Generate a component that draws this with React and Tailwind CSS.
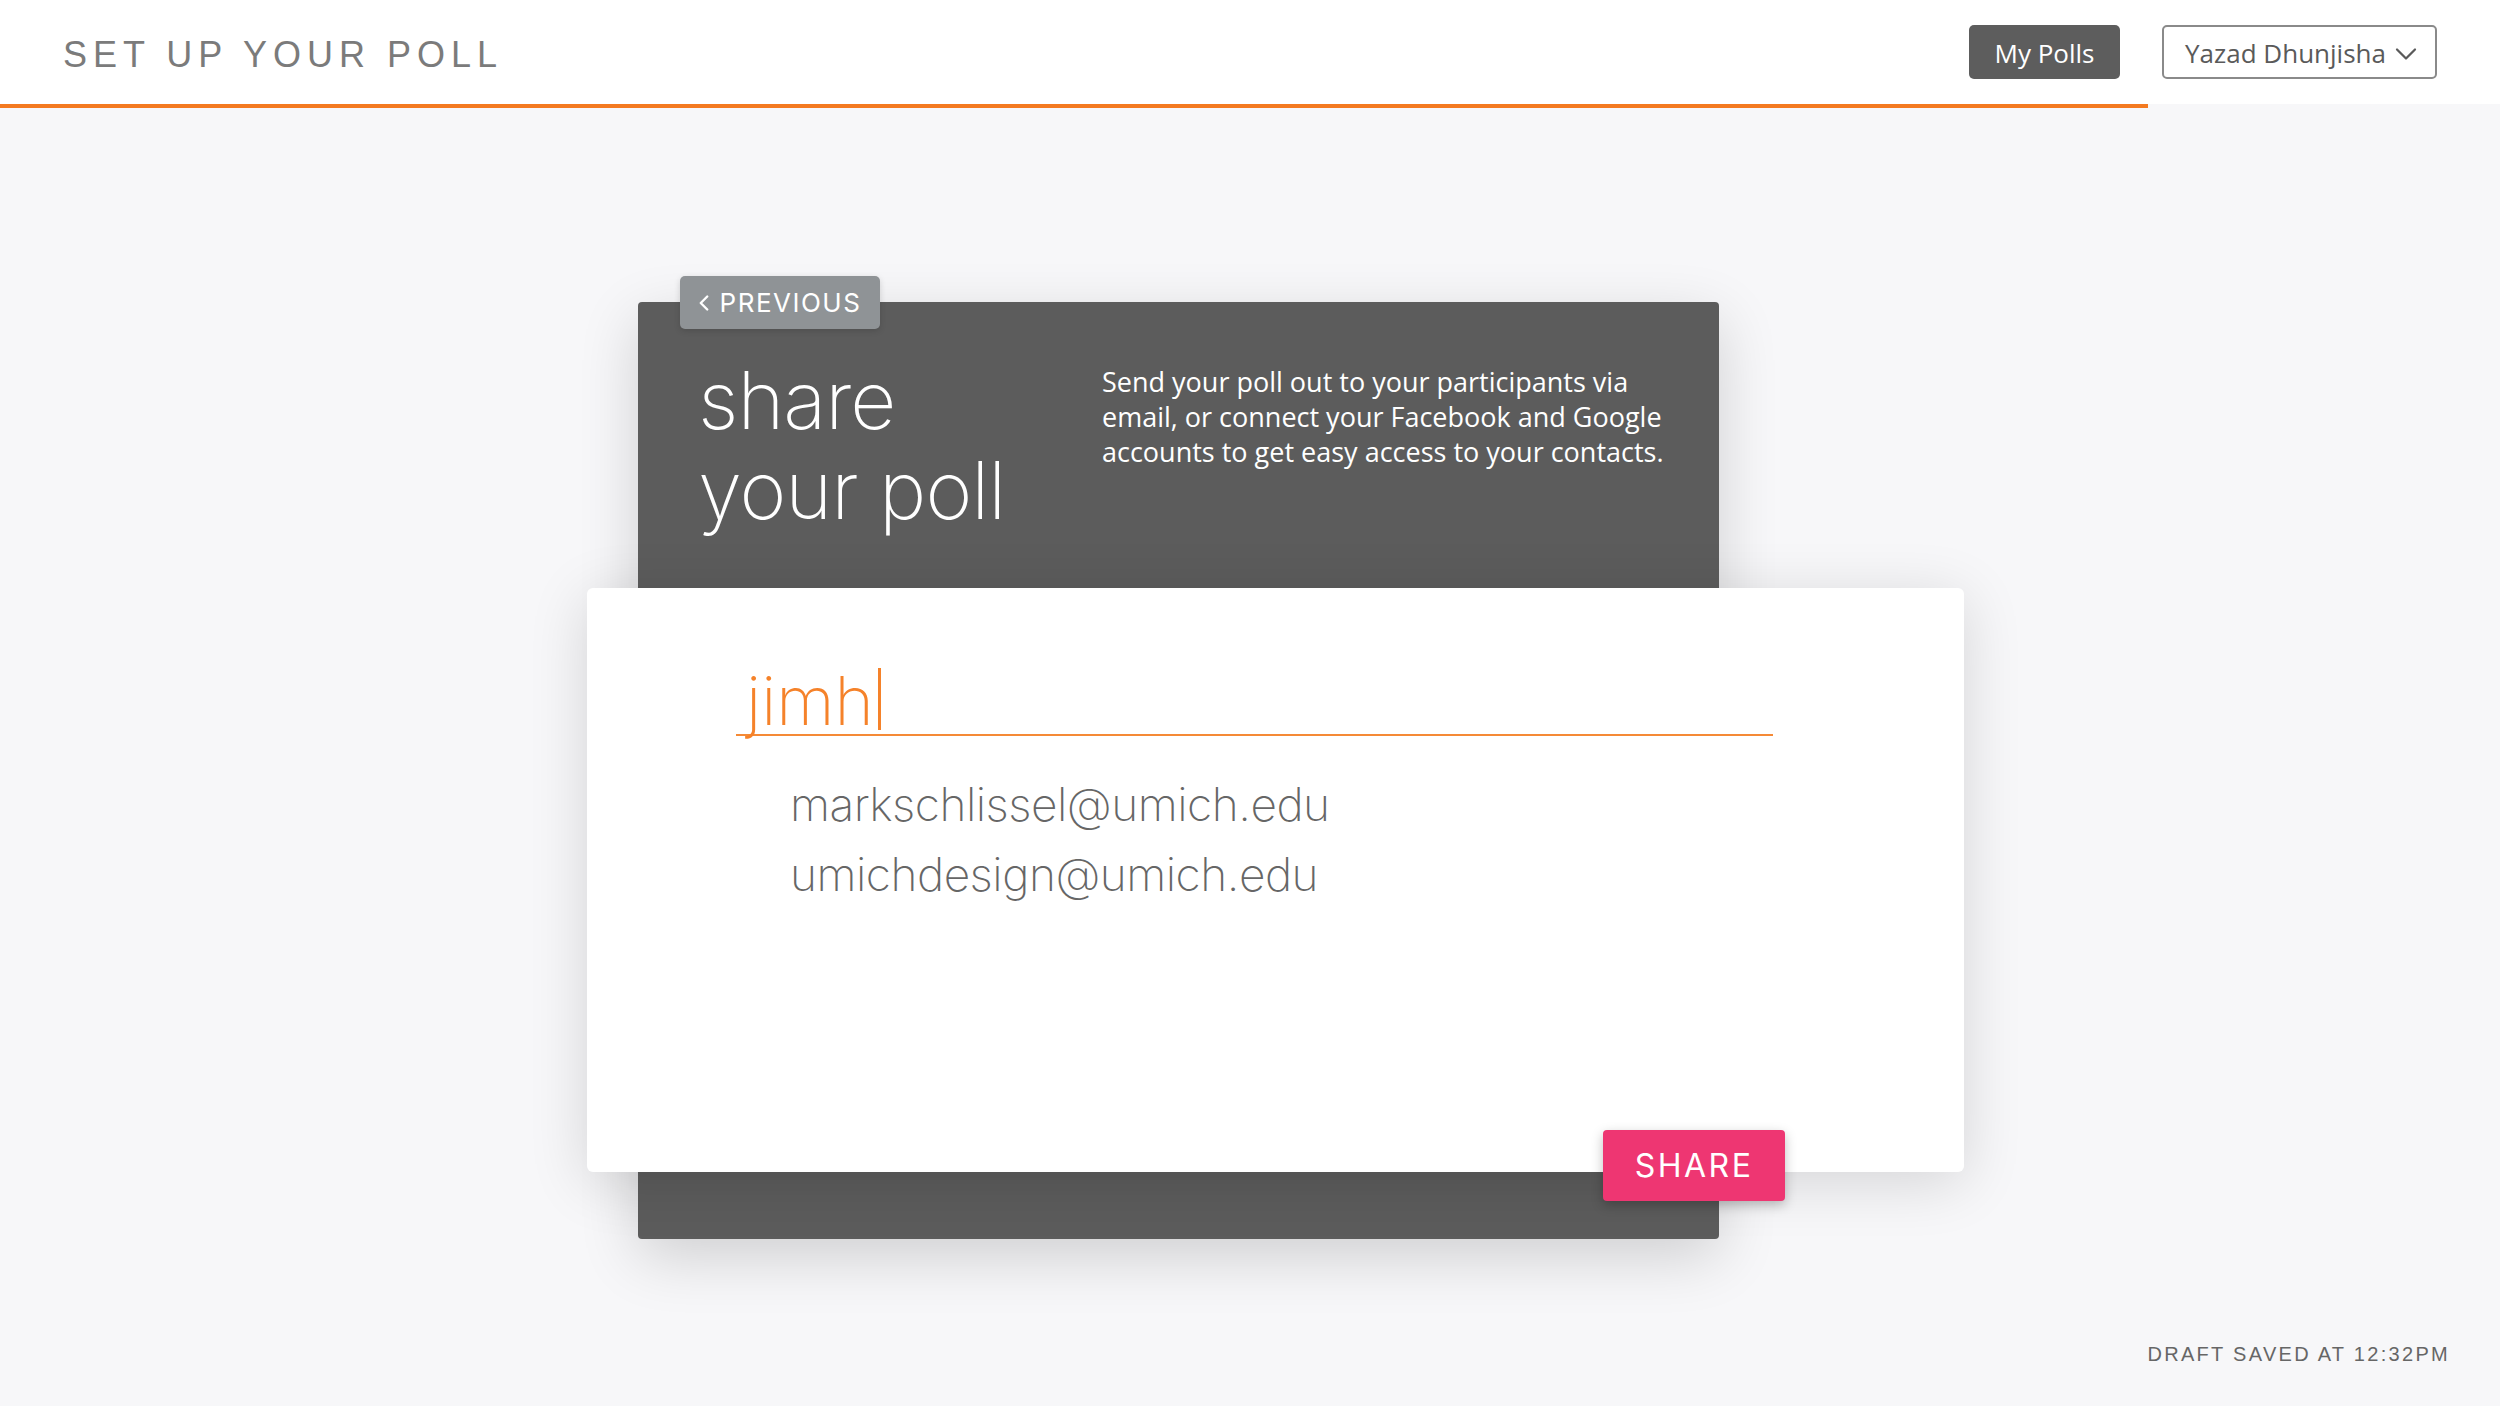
import React from "react";
import { ChevronDown, ChevronLeft } from "lucide-react";

const suggestions = ["markschlissel@umich.edu", "umichdesign@umich.edu"];

export default function App() {
  return (
    <div className="min-h-screen flex flex-col bg-[#f7f7f9]">
      {/* Top bar */}
      <header className="h-[104px] bg-white flex items-center justify-between pl-[63px] pr-[63px]">
        <h1 className="pt-[5px] font-['Liberation_Sans',sans-serif] text-[36px] tracking-[6px] text-[#7b7b7b] font-normal">
          SET UP YOUR POLL
        </h1>
        <div className="flex items-center gap-[42px] font-['Open_Sans',sans-serif]">
          <button className="h-[54px] w-[151px] rounded-[5px] bg-[#5d5d5d] text-white text-[26px] pt-[2px]">
            My Polls
          </button>
          <button className="h-[54px] w-[275px] rounded-[5px] border-2 border-[#8a8a8a] bg-white text-[#5a5a5a] text-[26px] flex items-center justify-center gap-[2px] pt-[2px] pl-[4px]">
            Yazad Dhunjisha
            <ChevronDown size={36} strokeWidth={1.5} className="text-[#5a5a5a] mt-[1px] -mr-[6px]" />
          </button>
        </div>
      </header>
      <div className="h-[4px]">
        <div className="h-full w-[2148px] bg-[#f47a20]" />
      </div>

      <main className="flex-1 flex flex-col">
        {/* Step card */}
        <div className="ml-[638px] mt-[194px] w-[1081px] rounded-[4px] bg-[#5c5c5c] relative shadow-[0_18px_60px_rgba(0,0,0,0.16)]">
          <button className="absolute -top-[26px] left-[42px] h-[53px] w-[200px] rounded-[5px] bg-[#8f9396] text-white flex items-center justify-center gap-[3px] font-['Inter',sans-serif] text-[26px] tracking-[1.5px] shadow-[0_2px_6px_rgba(0,0,0,0.15)]">
            <ChevronLeft size={26} strokeWidth={2.2} className="-ml-[8px]" />
            PREVIOUS
          </button>

          <div className="h-[286px] flex pl-[60px] pt-[53px]">
            <div className="w-[404px] font-['Inter',sans-serif] font-extralight text-white text-[80px] leading-[90px] tracking-[-1px]">
              share
              <br />
              your poll
            </div>
            <p className="mt-[9px] font-['Open_Sans',sans-serif] text-white text-[27px] leading-[35px] whitespace-nowrap">
              Send your poll out to your participants via
              <br />
              email, or connect your Facebook and Google
              <br />
              accounts to get easy access to your contacts.
            </p>
          </div>

          <div className="-ml-[51px] w-[1377px] h-[584px] bg-white rounded-[6px] relative pl-[149px] pt-[80px] shadow-[0_10px_60px_rgba(0,0,0,0.14)]">
            <div className="w-[1037px] h-[68px] border-b-2 border-[#f58a36] pl-[10px] flex items-start">
              <span className="font-['Inter',sans-serif] font-extralight text-[67px] leading-[66px] text-[#f5822a]">
                jimh
              </span>
              <span className="ml-[4px] w-[3px] h-[62px] bg-[#f5822a]" />
            </div>
            <ul className="pl-[54px] mt-[33px] font-['Inter',sans-serif] font-extralight text-[46px] leading-[70px] tracking-[-0.5px] text-[#666666]">
              {suggestions.map((s) => (
                <li key={s}>{s}</li>
              ))}
            </ul>

            <button className="absolute top-[542px] left-[1016px] h-[71px] w-[182px] rounded-[4px] bg-[#ee3672] text-white font-['Inter',sans-serif] text-[32px] tracking-[2.5px] shadow-[0_4px_12px_rgba(0,0,0,0.25)]">
              SHARE
            </button>
          </div>

          <div className="h-[67px]" />
        </div>

        <div className="mt-auto flex justify-end pr-[50px] pb-[37px]">
          <span className="font-['Liberation_Sans',sans-serif] text-[20px] tracking-[2.3px] text-[#666666]">
            DRAFT SAVED AT 12:32PM
          </span>
        </div>
      </main>
    </div>
  );
}
